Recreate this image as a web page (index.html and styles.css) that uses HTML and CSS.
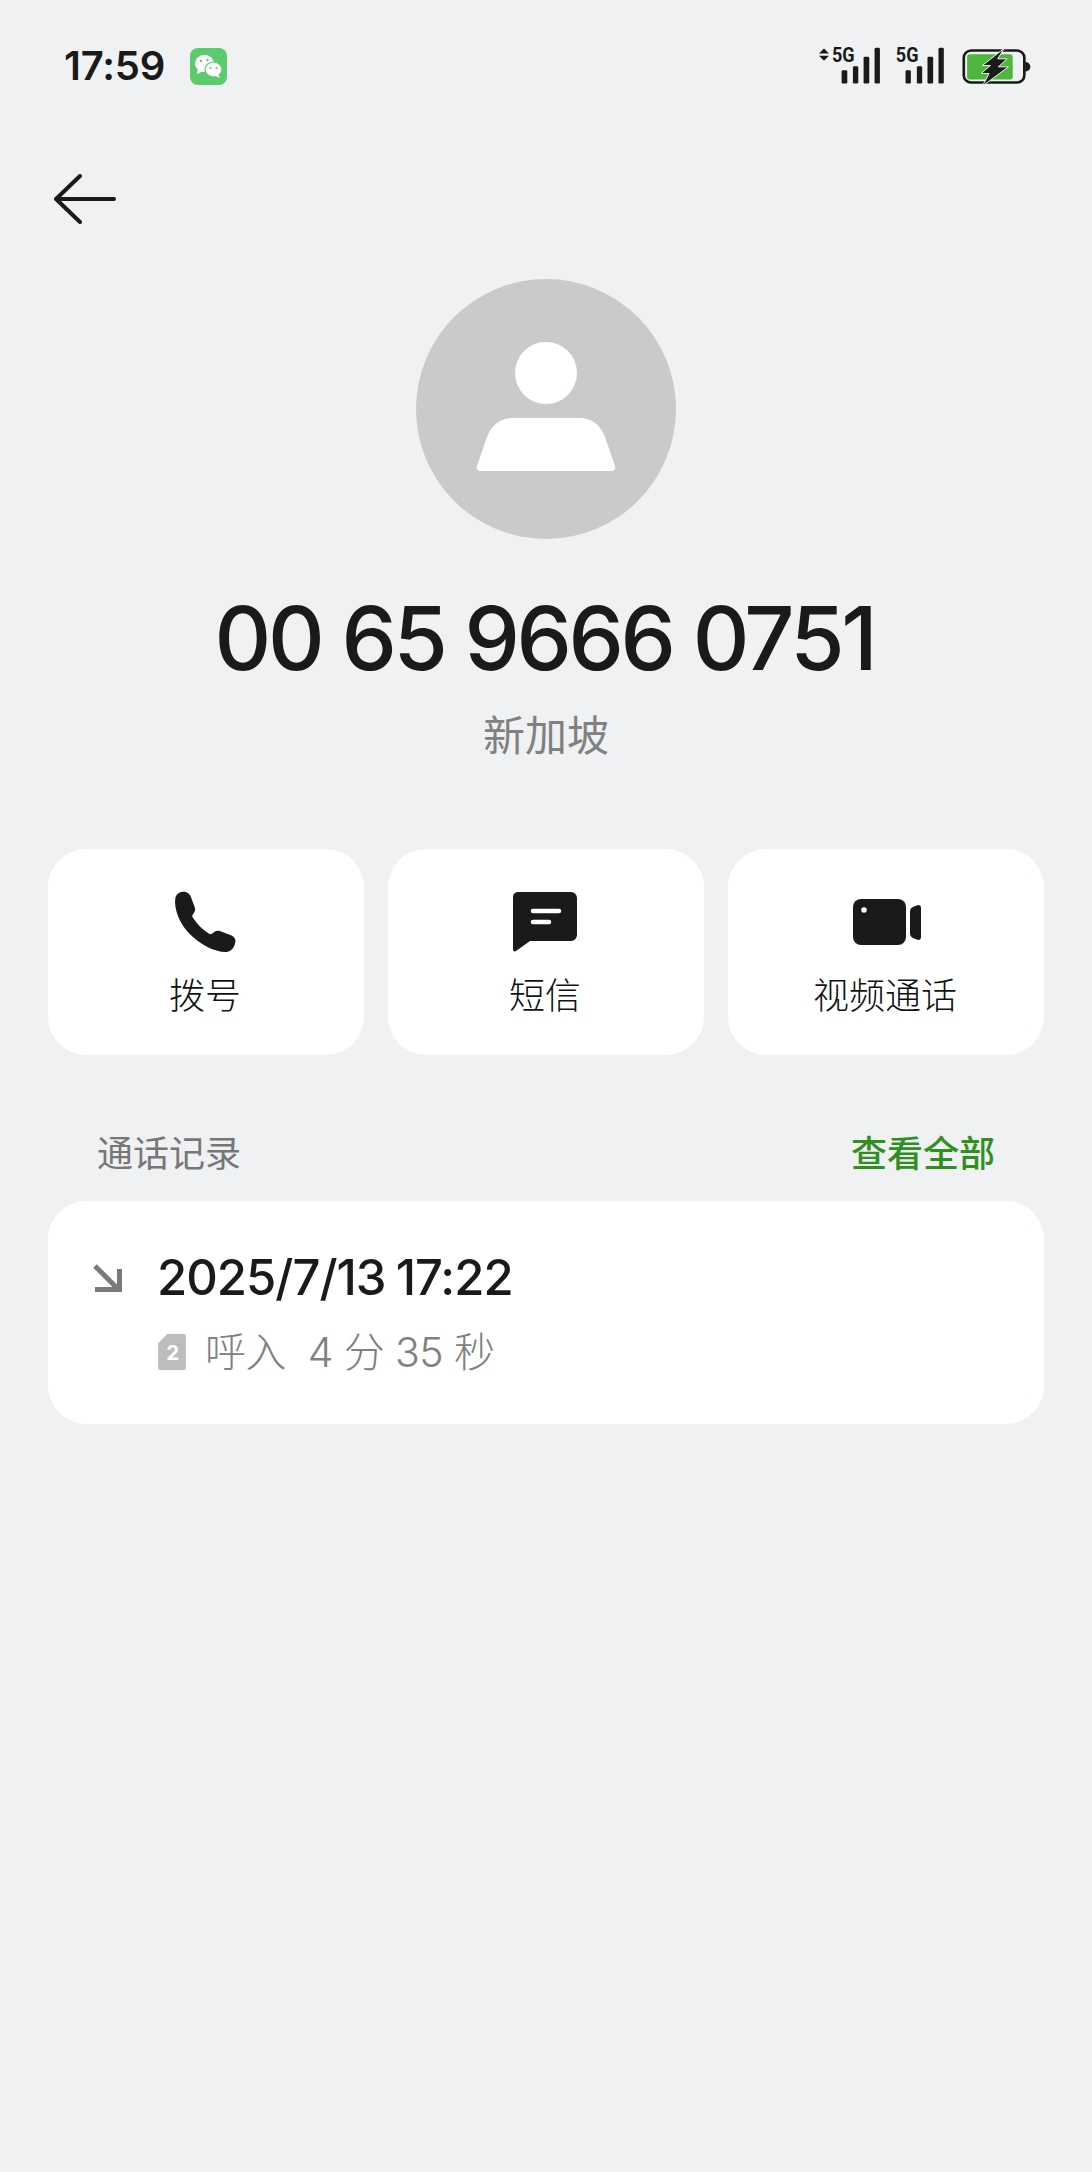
FILE: index.html
```html
<!DOCTYPE html>
<html lang="zh-CN">
<head>
  <meta charset="UTF-8" />
  <meta name="viewport" content="width=device-width, initial-scale=1.0" />
  <title>通话详情</title>
  <link rel="stylesheet" href="styles.css">
</head>
<body>
  <!-- Status bar -->
  <div class="status-bar">
    <span class="time">17:59</span>
    <svg class="wechat" viewBox="0 0 37 37">
      <rect width="37" height="37" rx="8" fill="#5ccb70" />
      <ellipse cx="14.500" cy="15.500" rx="9.500" ry="8.500" fill="#fff" />
      <path d="M8 21 7 26 13 23z" fill="#fff" />
      <ellipse cx="23.500" cy="21.500" rx="8.500" ry="7.500" fill="#fff" stroke="#5ccb70" stroke-width="1.200" />
      <path d="M28 26 30 30 25 28z" fill="#fff" />
      <g fill="#5ccb70">
        <circle cx="11" cy="13" r="1.200" /><circle cx="17.500" cy="12" r="1.200" />
        <circle cx="20.500" cy="20" r="1.100" /><circle cx="26.500" cy="20" r="1.100" />
      </g>
    </svg>
    <svg class="status-icons" viewBox="85 60 640 143">
      <g fill="#1a1a1a">
        <path d="M100 85 115 100H85zM100 122 85 107H115z" />
        <text class="net" x="124" y="125" textLength="68" lengthAdjust="spacingAndGlyphs">5G</text>
        <rect x="153" y="150" width="17" height="40" rx="4" />
        <rect x="187" y="138" width="16" height="52" rx="4" />
        <rect x="219" y="110" width="17" height="80" rx="4" />
        <rect x="252" y="83" width="16" height="107" rx="4" />
        <text class="net" x="316" y="125" textLength="68" lengthAdjust="spacingAndGlyphs">5G</text>
        <rect x="345" y="150" width="16" height="40" rx="4" />
        <rect x="379" y="138" width="16" height="52" rx="4" />
        <rect x="411" y="110" width="17" height="80" rx="4" />
        <rect x="444" y="83" width="16" height="107" rx="4" />
      </g>
      <rect x="520" y="91" width="182" height="96" rx="22" fill="none" stroke="#1a1a1a" stroke-width="8" />
      <path d="M705 125c10 2 15 7 15 15s-5 13-15 15z" fill="#1a1a1a" />
      <rect x="530" y="102" width="137" height="76" rx="8" fill="#4eb63c" />
      <path d="M642 84 576 136 600 136 572 160 596 160 576 198 654 140 624 140 650 116 622 116z" fill="#1a1a1a" stroke="#eff1f3" stroke-width="3" />
    </svg>
  </div>

  <div class="top-nav">
    <svg class="back" viewBox="0 0 62 50">
      <path d="M26 2 2 25 26 48M2 25H60" fill="none" stroke="#1a1a1a" stroke-width="4" stroke-linecap="round" stroke-linejoin="round" />
    </svg>
  </div>

  <!-- Contact -->
  <div class="contact">
    <div class="avatar">
      <svg viewBox="0 0 260 260" width="260" height="260">
        <circle cx="130" cy="94" r="31" fill="#fff" />
        <path d="M97 139H163C177 139 185 147 189 158L199 187C200 190 198 192 196 192H64C62 192 60 190 61 187L71 158C75 147 83 139 97 139Z" fill="#fff" />
      </svg>
    </div>
    <div class="number">00 65 9666 0751</div>
    <div class="region">新加坡</div>
  </div>

  <!-- Actions -->
  <div class="actions">
    <div class="action">
      <div class="action-icon">
        <svg width="65" height="64" viewBox="430 148 195 192">
          <path d="M437 172C440 158 455 150 470 155 478 157 481 163 484 170L496 202C498 210 494 216 489 222 487 225 488 229 491 233 503 252 520 268 538 279 542 281 546 281 549 278 555 272 561 268 570 271L604 284C613 288 619 295 617 305 614 322 604 333 590 334 555 335 510 310 480 280 450 250 432 205 437 172Z" fill="#1a1a1a" />
        </svg>
      </div>
      <span>拨号</span>
    </div>
    <div class="action">
      <div class="action-icon">
        <svg width="64" height="60" viewBox="0 0 64 60">
          <path d="M6 0H58A6 6 0 0 1 64 6V43A6 6 0 0 1 58 49H17L3 59C1 60 0 59 0 57V5Q0 0 6 0Z" fill="#1a1a1a" />
          <path d="M20 19H46M20 30H36" stroke="#fff" stroke-width="4.500" stroke-linecap="round" />
        </svg>
      </div>
      <span>短信</span>
    </div>
    <div class="action">
      <div class="action-icon action-icon-video">
        <svg width="68" height="46" viewBox="0 0 68 46">
          <rect width="53" height="46" rx="8" fill="#1a1a1a" />
          <circle cx="11" cy="11" r="2.800" fill="#fff" />
          <path d="M57 13Q57 9 60 8L65 6Q68 6 68 9V38Q68 41 65 41L60 39Q57 38 57 34Z" fill="#1a1a1a" />
        </svg>
      </div>
      <span>视频通话</span>
    </div>
  </div>

  <!-- Call log -->
  <div class="section-head">
    <span class="section-title">通话记录</span>
    <span class="section-link">查看全部</span>
  </div>
  <div class="log-card">
    <svg class="call-arrow" viewBox="0 0 29 29">
      <path d="M2 2 24 24M2 25.500H26.500V5" fill="none" stroke="#7a7a7a" stroke-width="5" />
    </svg>
    <div class="call-date">2025/7/13 17:22</div>
    <div class="call-info">
      <svg class="sim" viewBox="0 0 27 35">
        <path d="M9 0H25Q27 0 27 2V33Q27 35 25 35H2Q0 35 0 33V9Z" fill="#bdbdbd" />
        <text x="14" y="25" class="sim-num">2</text>
      </svg>
      <span>呼入&nbsp; 4 分 35 秒</span>
    </div>
  </div>
</body>
</html>
```

FILE: styles.css
```css
* {
  box-sizing: border-box;
}

body {
  margin: 0;
  min-height: 2172px;
  background: #eff1f3;
  color: #1a1a1a;
  font-family: Inter, "Noto Sans CJK SC", sans-serif;
}

.status-bar {
  height: 132px;
  padding: 0 60px 0 64px;
  display: flex;
  align-items: center;
}

.time {
  font-size: 40px;
  line-height: 48px;
  font-weight: 600;
  letter-spacing: -0.2px;
}

.wechat {
  width: 37px;
  height: 37px;
  margin-left: 25px;
}

.status-icons {
  width: 213px;
  height: 48px;
  margin-bottom: 4px;
  margin-left: auto;
}

.net {
  font-family: Roboto, sans-serif;
  font-size: 62px;
  font-weight: 700;
}

.top-nav {
  height: 134px;
  padding-left: 54px;
  display: flex;
  align-items: center;
}

.back {
  width: 62px;
  height: 50px;
}

.contact {
  display: flex;
  flex-direction: column;
  align-items: center;
  margin-top: 13px;
}

.avatar {
  width: 260px;
  height: 260px;
  border-radius: 50%;
  background: #c9cacc;
}

.avatar svg {
  display: block;
}

.number {
  margin-top: 49px;
  padding-right: 3px;
  font-size: 88px;
  line-height: 100px;
  font-weight: 500;
  letter-spacing: -3.4px;
}

.region {
  margin-top: 18px;
  font-size: 42px;
  line-height: 60px;
  color: #808080;
}

.actions {
  display: grid;
  grid-template-columns: repeat(3, 1fr);
  gap: 24px;
  margin-top: 83px;
  padding: 0 48px;
}

.action {
  height: 206px;
  padding: 41px 2px 0 0;
  background: #fff;
  border-radius: 38px;
  display: flex;
  flex-direction: column;
  align-items: center;
  font-size: 36px;
  line-height: 50px;
  font-weight: 300;
  color: #111;
}

.action-icon {
  height: 64px;
  margin-bottom: 17px;
  display: flex;
  align-items: center;
  justify-content: center;
}

.action-icon-video {
  padding-left: 4px;
}

.section-head {
  display: flex;
  justify-content: space-between;
  margin-top: 74px;
  padding: 0 97px;
  font-size: 36px;
  line-height: 50px;
}

.section-title {
  color: #777;
}

.section-link {
  color: #2f8f1f;
  font-weight: 500;
}

.log-card {
  display: grid;
  grid-template-columns: 64px 1fr;
  row-gap: 24px;
  align-items: center;
  height: 223px;
  margin: 22px 48px 0;
  padding: 52px 45px 47px;
  background: #fff;
  border-radius: 38px;
}

.call-arrow {
  width: 29px;
  height: 29px;
}

.call-date {
  font-size: 49px;
  line-height: 50px;
  font-weight: 450;
  letter-spacing: -1px;
  word-spacing: -2px;
}

.call-info {
  grid-column: 2;
  display: flex;
  align-items: center;
  gap: 19px;
  font-size: 41px;
  line-height: 50px;
  font-weight: 300;
  letter-spacing: -0.6px;
  color: #808080;
}

.sim {
  width: 28px;
  height: 36px;
  margin-left: 1px;
}

.sim-num {
  fill: #fff;
  font-size: 20px;
  font-weight: 700;
  text-anchor: middle;
}
```
